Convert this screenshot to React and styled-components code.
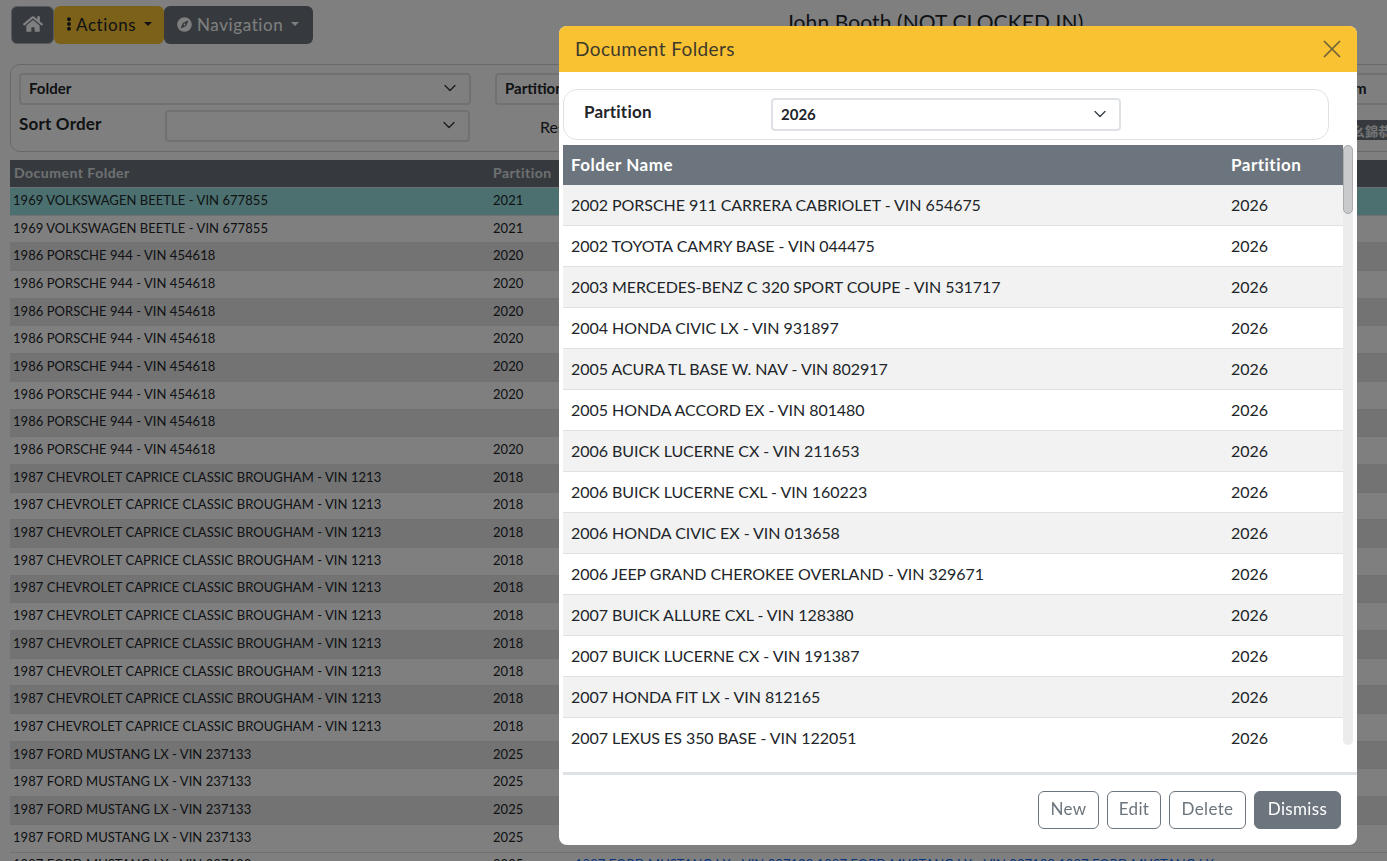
import React from 'react';
import styled, { createGlobalStyle } from 'styled-components';
import { FaHome, FaCompass, FaEllipsisV } from 'react-icons/fa';

const FONT = `Lato, "Open Sans", "Liberation Sans", "Noto Sans CJK SC", sans-serif`;

const GlobalStyle = createGlobalStyle`
  html, body {
    margin: 0;
    height: 100%;
    overflow: hidden;
    background: #fff;
    font-family: ${FONT};
    color: #212529;
  }
  * { box-sizing: border-box; }
`;

const Page = styled.div`
  height: 861px;
  overflow: hidden;
  padding: 6px 0 0 10px;
`;

const TopBar = styled.div`
  display: flex;
  align-items: center;
  height: 38px;
`;

const Button = styled.div`
  display: flex;
  align-items: center;
  flex: none;
  width: ${p => p.$w}px;
  height: 38px;
  margin-left: ${p => p.$ml || 0}px;
  padding: 0 0 2px ${p => p.$pl}px;
  gap: ${p => p.$gap || 0}px;
  font-size: 17px;
  letter-spacing: 0.6px;
  border-radius: 6px;
  border: ${p => (p.$outlined ? '1px solid #adb5bd' : 'none')};
  background: ${p => p.$bg};
  color: ${p => p.$fg};
`;

const Caret = styled.span`
  width: 0;
  height: 0;
  margin-left: ${p => p.$ml}px;
  border-top: 4.5px solid currentColor;
  border-left: 4.5px solid transparent;
  border-right: 4.5px solid transparent;
`;

const UserName = styled.div`
  flex: none;
  margin-left: 472px;
  font-size: 21px;
  letter-spacing: 0.1px;
  position: relative;
  top: -4px;
`;

const Filter = styled.div`
  width: 1387px;
  height: 88px;
  margin-top: 20px;
  border: 1px solid #ced4da;
  border-radius: 10px;
  padding: 8px;
`;

const FilterRow = styled.div`
  display: flex;
  align-items: center;
  margin-bottom: 5px;
`;

const Select = styled.div`
  display: flex;
  align-items: center;
  justify-content: space-between;
  flex: none;
  width: ${p => p.$w}px;
  height: ${p => p.$h || 32}px;
  margin-left: ${p => p.$ml || 0}px;
  padding: 0 11px 2px 8px;
  background: #fff;
  border: 2px solid #dee2e6;
  border-radius: 4px;
  font-size: 15px;
  font-weight: 700;
`;

const SortLabel = styled.div`
  flex: none;
  width: 146px;
  padding-bottom: 5px;
  font-size: 17px;
  font-weight: 700;
  letter-spacing: 0.2px;
`;

const ResetLabel = styled.div`
  flex: none;
  width: 782px;
  margin-left: 70px;
  font-size: 16px;
`;

const CodeChip = styled.div`
  display: flex;
  align-items: center;
  flex: none;
  width: 140px;
  height: 20px;
  margin-top: 8px;
  padding-left: 30px;
  background: #6c757d;
  color: #e4e6e8;
  font-size: 13px;
  font-weight: 700;
`;

const BgTable = styled.div`
  width: 1377px;
  margin-top: 8px;
`;

const BgHead = styled.div`
  display: grid;
  grid-template-columns: 479px 1fr;
  align-items: center;
  height: 27px;
  padding: 0 0 3px 4px;
  background: #6c757d;
  color: #dfe1e3;
  font-size: 14px;
  font-weight: 700;
  letter-spacing: 0.5px;
`;

const BgRow = styled.div`
  display: grid;
  grid-template-columns: 480px 82px 1fr;
  align-items: center;
  height: 27.7px;
  padding: 0 0 3px 3px;
  font-size: 13px;
  letter-spacing: 0.05px;
  border-top: 1px solid #dee2e6;
  background: ${p => (p.$active ? '#97e0de' : p.$odd ? '#e6e6e6' : '#fff')};
`;

const BgLink = styled.span`
  color: #0d6efd;
  white-space: nowrap;
`;

const Backdrop = styled.div`
  position: fixed;
  inset: 0;
  background: rgba(0, 0, 0, 0.5);
`;

const Modal = styled.div`
  position: fixed;
  left: 559px;
  top: 26px;
  width: 798px;
  height: 819px;
  display: flex;
  flex-direction: column;
  background: #fff;
  border-radius: 8px;
  overflow: hidden;
`;

const ModalHeader = styled.div`
  display: flex;
  align-items: center;
  justify-content: space-between;
  flex: none;
  height: 46px;
  padding: 0 16px 1px 16px;
  background: #f9c232;
  font-size: 19px;
  letter-spacing: 0.4px;
  color: #3e3a2b;
`;

const CloseIcon = styled.svg`
  display: block;
  width: 18px;
  height: 18px;
  fill: none;
  stroke: #6e6238;
  stroke-width: 1.7;
`;

const ChevronIcon = styled.svg`
  display: block;
  flex: none;
  width: 16px;
  height: 16px;
  fill: none;
  stroke: #343a40;
  stroke-width: 1.3;
  stroke-linecap: round;
  stroke-linejoin: round;
`;

const Chevron = () => (
  <ChevronIcon viewBox="0 0 16 16"><path d="M3 5.5l5 5 5-5" /></ChevronIcon>
);

const PartitionBox = styled.div`
  display: flex;
  align-items: center;
  flex: none;
  width: 766px;
  height: 51px;
  margin: 17px 0 0 4px;
  padding: 0 0 0 20px;
  border: 1px solid #dee2e6;
  border-radius: 14px;
`;

const PartitionLabel = styled.div`
  flex: none;
  width: 187px;
  padding-bottom: 7px;
  font-size: 17px;
  font-weight: 700;
  letter-spacing: 0.2px;
  color: #212529;
`;

const TableWrap = styled.div`
  position: relative;
  flex: none;
  width: 794px;
  height: 630px;
  margin: 5px 0 0 4px;
  border-bottom: 3px solid #dee2e6;
  overflow: hidden;
`;

const Track = styled.div`
  position: absolute;
  right: 4px;
  top: 0;
  width: 10px;
  height: 600px;
  border-radius: 5px;
  background: #ececec;
  &::before {
    content: '';
    display: block;
    height: 67px;
    border-radius: 5px;
    border: 1px solid #a9abad;
    background: #c9cacb;
  }
`;

const FolderHead = styled.div`
  display: grid;
  grid-template-columns: 660px 1fr;
  align-items: center;
  width: 780px;
  height: 40px;
  padding: 0 0 2px 8px;
  background: #6c757d;
  color: #fff;
  font-size: 17px;
  font-weight: 700;
  letter-spacing: 0.5px;
`;

const FolderRow = styled.div`
  display: grid;
  grid-template-columns: 660px 1fr;
  align-items: center;
  width: 780px;
  height: 41px;
  padding: 0 0 2px 8px;
  font-size: 16px;
  letter-spacing: -0.05px;
  color: #212529;
  background: ${p => (p.$odd ? '#f2f2f2' : '#fff')};
  border-bottom: ${p => (p.$last ? 'none' : '1px solid #dee2e6')};
`;

const ModalFooter = styled.div`
  display: flex;
  justify-content: flex-end;
  gap: 8px;
  padding: 16px 16px 0 0;
`;

const FooterButton = styled.div`
  display: flex;
  align-items: center;
  justify-content: center;
  width: ${p => p.$w}px;
  height: 38px;
  padding-bottom: 3px;
  font-size: 17px;
  letter-spacing: 0.35px;
  border: 1px solid #6c757d;
  border-radius: 6px;
  color: ${p => (p.$solid ? '#fff' : '#6c757d')};
  background: ${p => (p.$solid ? '#6c757d' : '#fff')};
`;

const background = [
  ['1969 VOLKSWAGEN BEETLE - VIN 677855', '2021', true],
  ['1969 VOLKSWAGEN BEETLE - VIN 677855', '2021'],
  ...Array(6).fill(['1986 PORSCHE 944 - VIN 454618', '2020']),
  ['1986 PORSCHE 944 - VIN 454618', ''],
  ['1986 PORSCHE 944 - VIN 454618', '2020'],
  ...Array(10).fill(['1987 CHEVROLET CAPRICE CLASSIC BROUGHAM - VIN 1213', '2018']),
  ...Array(4).fill(['1987 FORD MUSTANG LX - VIN 237133', '2025']),
];

const folders = [
  '2002 PORSCHE 911 CARRERA CABRIOLET - VIN 654675',
  '2002 TOYOTA CAMRY BASE - VIN 044475',
  '2003 MERCEDES-BENZ C 320 SPORT COUPE - VIN 531717',
  '2004 HONDA CIVIC LX - VIN 931897',
  '2005 ACURA TL BASE W. NAV - VIN 802917',
  '2005 HONDA ACCORD EX - VIN 801480',
  '2006 BUICK LUCERNE CX - VIN 211653',
  '2006 BUICK LUCERNE CXL - VIN 160223',
  '2006 HONDA CIVIC EX - VIN 013658',
  '2006 JEEP GRAND CHEROKEE OVERLAND - VIN 329671',
  '2007 BUICK ALLURE CXL - VIN 128380',
  '2007 BUICK LUCERNE CX - VIN 191387',
  '2007 HONDA FIT LX - VIN 812165',
  '2007 LEXUS ES 350 BASE - VIN 122051',
];

const App = () => (
  <>
    <GlobalStyle />
    <Page>
      <TopBar>
        <Button $w={43} $pl={11} $ml={1} $bg="#6c757d" $fg="#fff" $outlined><FaHome size={20} /></Button>
        <Button $w={110} $pl={8} $bg="#f9c232" $fg="#212529"><FaEllipsisV size={14} />Actions<Caret $ml={8} /></Button>
        <Button $w={149} $pl={13} $gap={5} $bg="#6c757d" $fg="#fff"><FaCompass size={15} />Navigation<Caret $ml={3} /></Button>
        <UserName>John Booth (NOT CLOCKED IN)</UserName>
      </TopBar>
      <Filter>
        <FilterRow>
          <Select $w={452}>Folder<Chevron /></Select>
          <Select $w={400} $ml={24}>Partition</Select>
          <Select $w={200} $ml={427}>From</Select>
        </FilterRow>
        <FilterRow>
          <SortLabel>Sort Order</SortLabel>
          <Select $w={305}><span /><Chevron /></Select>
          <ResetLabel>Reset</ResetLabel>
          <CodeChip>幺錦恭</CodeChip>
        </FilterRow>
      </Filter>
      <BgTable>
        <BgHead><span>Document Folder</span><span>Partition</span></BgHead>
        {background.map((row, i) => (
          <BgRow key={i} $active={row[2]} $odd={i % 2 === 0}>
            <span>{row[0]}</span><span>{row[1]}</span>
          </BgRow>
        ))}
        <BgRow>
          <span>1987 FORD MUSTANG LX - VIN 237133</span><span>2025</span>
          <BgLink>1987 FORD MUSTANG LX - VIN 237133 1987 FORD MUSTANG LX - VIN 237133 1987 FORD MUSTANG LX</BgLink>
        </BgRow>
      </BgTable>
    </Page>
    <Backdrop />
    <Modal>
      <ModalHeader>
        Document Folders
        <CloseIcon viewBox="0 0 18 18"><path d="M1 1l16 16M17 1L1 17" /></CloseIcon>
      </ModalHeader>
      <PartitionBox>
        <PartitionLabel>Partition</PartitionLabel>
        <Select $w={350} $h={33}>2026<Chevron /></Select>
      </PartitionBox>
      <TableWrap>
        <Track />
        <FolderHead><span>Folder Name</span><span>Partition</span></FolderHead>
        {folders.map((name, i) => (
          <FolderRow key={name} $odd={i % 2 === 0} $last={i === folders.length - 1}>
            <span>{name}</span><span>2026</span>
          </FolderRow>
        ))}
      </TableWrap>
      <ModalFooter>
        <FooterButton $w={61}>New</FooterButton>
        <FooterButton $w={54}>Edit</FooterButton>
        <FooterButton $w={77}>Delete</FooterButton>
        <FooterButton $w={87} $solid>Dismiss</FooterButton>
      </ModalFooter>
    </Modal>
  </>
);

export default App;
